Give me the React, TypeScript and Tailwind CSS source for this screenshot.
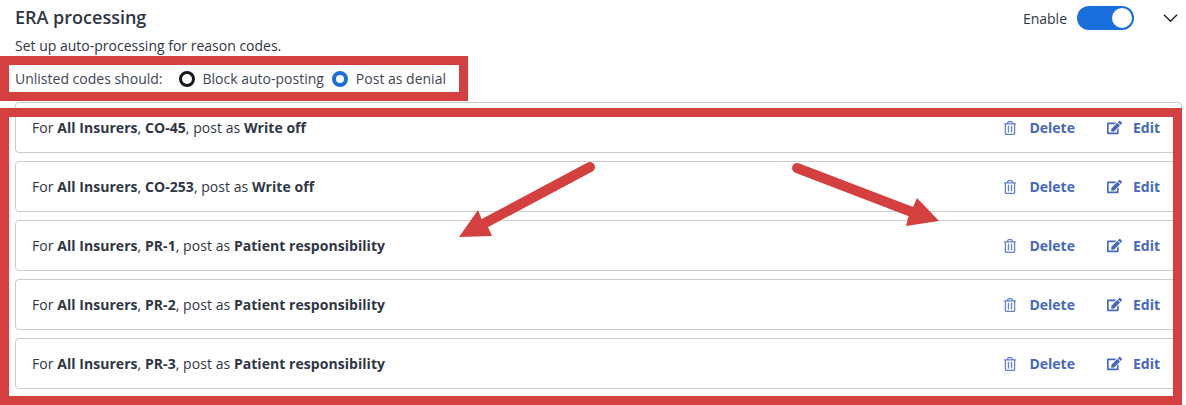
import { FaEdit, FaRegTrashAlt } from "react-icons/fa";

const rows = [
  { code: "CO-45", action: "Write off" },
  { code: "CO-253", action: "Write off" },
  { code: "PR-1", action: "Patient responsibility" },
  { code: "PR-2", action: "Patient responsibility" },
  { code: "PR-3", action: "Patient responsibility" },
];

function Row({ code, action }: { code: string; action: string }) {
  return (
    <div className="h-[51px] flex items-center justify-between pl-4 pr-[21px] border border-[#cccccc] rounded bg-white text-[14px] text-[#2f3644]">
      <p className="tracking-[0.05px]">
        For <b className="font-bold">All Insurers</b>, <b className="font-bold">{code}</b>, post as{" "}
        <b className="font-bold">{action}</b>
      </p>
      <div className="flex items-center font-bold text-[#4668c0]">
        <FaRegTrashAlt className="text-[14px] text-[#6384cc]" />
        <span className="ml-3">Delete</span>
        <FaEdit className="text-[15px] ml-8" />
        <span className="ml-[11px]">Edit</span>
      </div>
    </div>
  );
}

export default function App() {
  return (
    <div className="relative w-[1186px] h-[405px] overflow-hidden bg-white font-['Open_Sans',sans-serif] text-[#2f3644]">
      <div className="pl-[15px] pr-1">
        {/* Header */}
        <div className="h-[36px] flex items-center justify-between">
          <h1 className="text-[18px] font-semibold pb-0.5">ERA processing</h1>
          <div className="flex items-center pr-[4px]">
            <span className="text-[14px]">Enable</span>
            <span className="ml-[10px] w-[57px] h-6 rounded-full bg-[#1a6fdc] flex items-center justify-end pr-[2px]">
              <span className="w-5 h-5 rounded-full bg-white" />
            </span>
            <svg viewBox="0 0 16 10" className="ml-[29px] w-[15px] h-[10px] fill-none stroke-[#1f2530] stroke-[1.5]">
              <path d="M1 1.5 8 8.5 15 1.5" />
            </svg>
          </div>
        </div>
        <p className="text-[14px] leading-[19px]">Set up auto-processing for reason codes.</p>

        {/* Unlisted codes */}
        <div className="h-[27px] mt-[10px] flex items-center text-[14px] text-[#3f4653]">
          <span>Unlisted codes should:</span>
          <span className="ml-[16px] w-4 h-4 rounded-full border-[3px] border-[#16181d]" />
          <span className="ml-2">Block auto-posting</span>
          <span className="ml-2 w-4 h-4 rounded-full border-[4px] border-[#1a6fdc]" />
          <span className="ml-2">Post as denial</span>
        </div>

        {/* Reason code rows */}
        <div className="mt-[10px] flex flex-col gap-2">
          {rows.map((r) => (
            <Row key={r.code} code={r.code} action={r.action} />
          ))}
        </div>
      </div>

      {/* Red annotations pasted over the screenshot */}
      <div className="absolute left-0 top-[56px] w-[468px] h-[45px] border-[9px] border-[#d43f3f]" />
      <div className="absolute left-0 top-[108px] w-[1182px] h-[297px] border-[9px] border-[#d43f3f]" />
      <svg className="absolute inset-0" width="1186" height="405" viewBox="0 0 1186 405">
        <path d="M590 167 485 223" stroke="#d43f3f" strokeWidth="10" strokeLinecap="round" fill="none" />
        <polygon points="459,237 478,210 482,220 488,227 492,236" fill="#d43f3f" />
        <path d="M797 168 912 212" stroke="#d43f3f" strokeWidth="10" strokeLinecap="round" fill="none" />
        <polygon points="939,221 917,198 913,207 908,218 906,226" fill="#d43f3f" />
      </svg>
    </div>
  );
}
